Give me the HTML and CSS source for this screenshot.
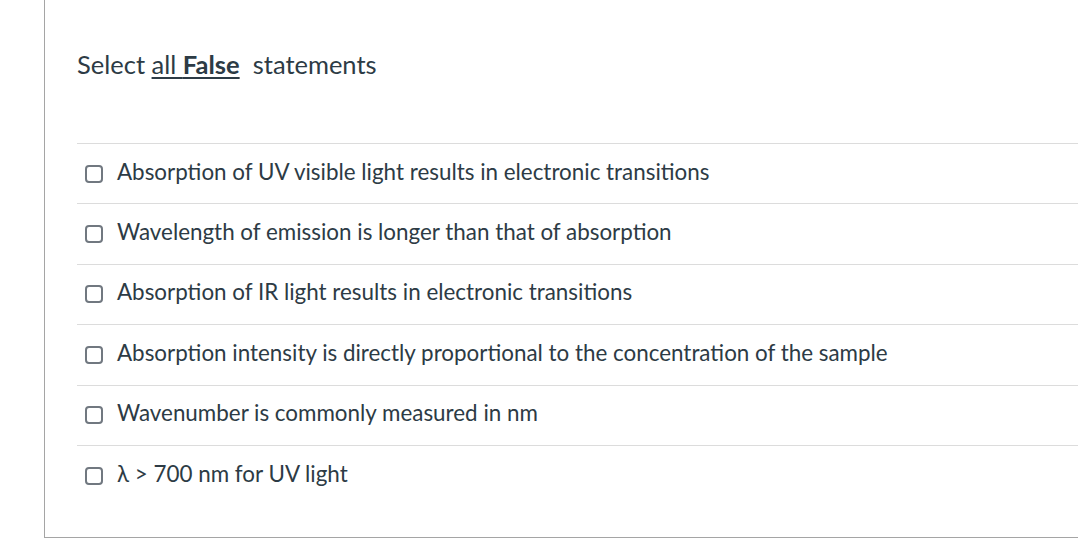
FILE: index.html
```html
<!DOCTYPE html>
<html lang="en">
<head>
<meta charset="utf-8">
<title>Question</title>
<link rel="stylesheet" href="styles.css">
</head>
<body>
<div class="question">
  <div class="question-text">Select <span class="emph">all <b>False</b></span>&nbsp; statements</div>
  <div class="answers">
    <label class="answer"><span class="box"></span><span class="label">Absorption of UV visible light results in electronic transitions</span></label>
    <label class="answer"><span class="box"></span><span class="label">Wavelength of emission is longer than that of absorption</span></label>
    <label class="answer"><span class="box"></span><span class="label">Absorption of IR light results in electronic transitions</span></label>
    <label class="answer"><span class="box"></span><span class="label">Absorption intensity is directly proportional to the concentration of the sample</span></label>
    <label class="answer"><span class="box"></span><span class="label">Wavenumber is commonly measured in nm</span></label>
    <label class="answer"><span class="box"></span><span class="label">λ &gt; 700 nm for UV light</span></label>
  </div>
</div>
</body>
</html>
```
FILE: styles.css
```css
html, body {
  margin: 0;
  padding: 0;
  background: #fff;
}
body {
  font-family: Lato, "Liberation Sans", sans-serif;
  color: #2d3b45;
}
.question {
  margin-left: 44px;
  height: 538px;
  box-sizing: border-box;
  border-left: 1px solid #a5a5a5;
  border-bottom: 1px solid #a5a5a5;
  padding: 46px 0 0 32px;
}
.question-text {
  font-size: 25.5px;
  line-height: 36px;
}
.emph {
  text-decoration: underline;
  text-decoration-thickness: 2px;
  text-underline-offset: 3px;
}
.emph b {
  font-weight: 700;
}
.answers {
  margin-top: 61px;
}
.answer {
  display: flex;
  align-items: center;
  gap: 14px;
  height: 60.4px;
  box-sizing: border-box;
  border-top: 1px solid #dcdcdc;
  padding-left: 8px;
  font-size: 22.4px;
}
.box {
  width: 18px;
  height: 18px;
  box-sizing: border-box;
  border: 2px solid #717880;
  border-radius: 4px;
  flex: none;
}
.label {
  line-height: 30px;
  padding-bottom: 4px;
}
```
